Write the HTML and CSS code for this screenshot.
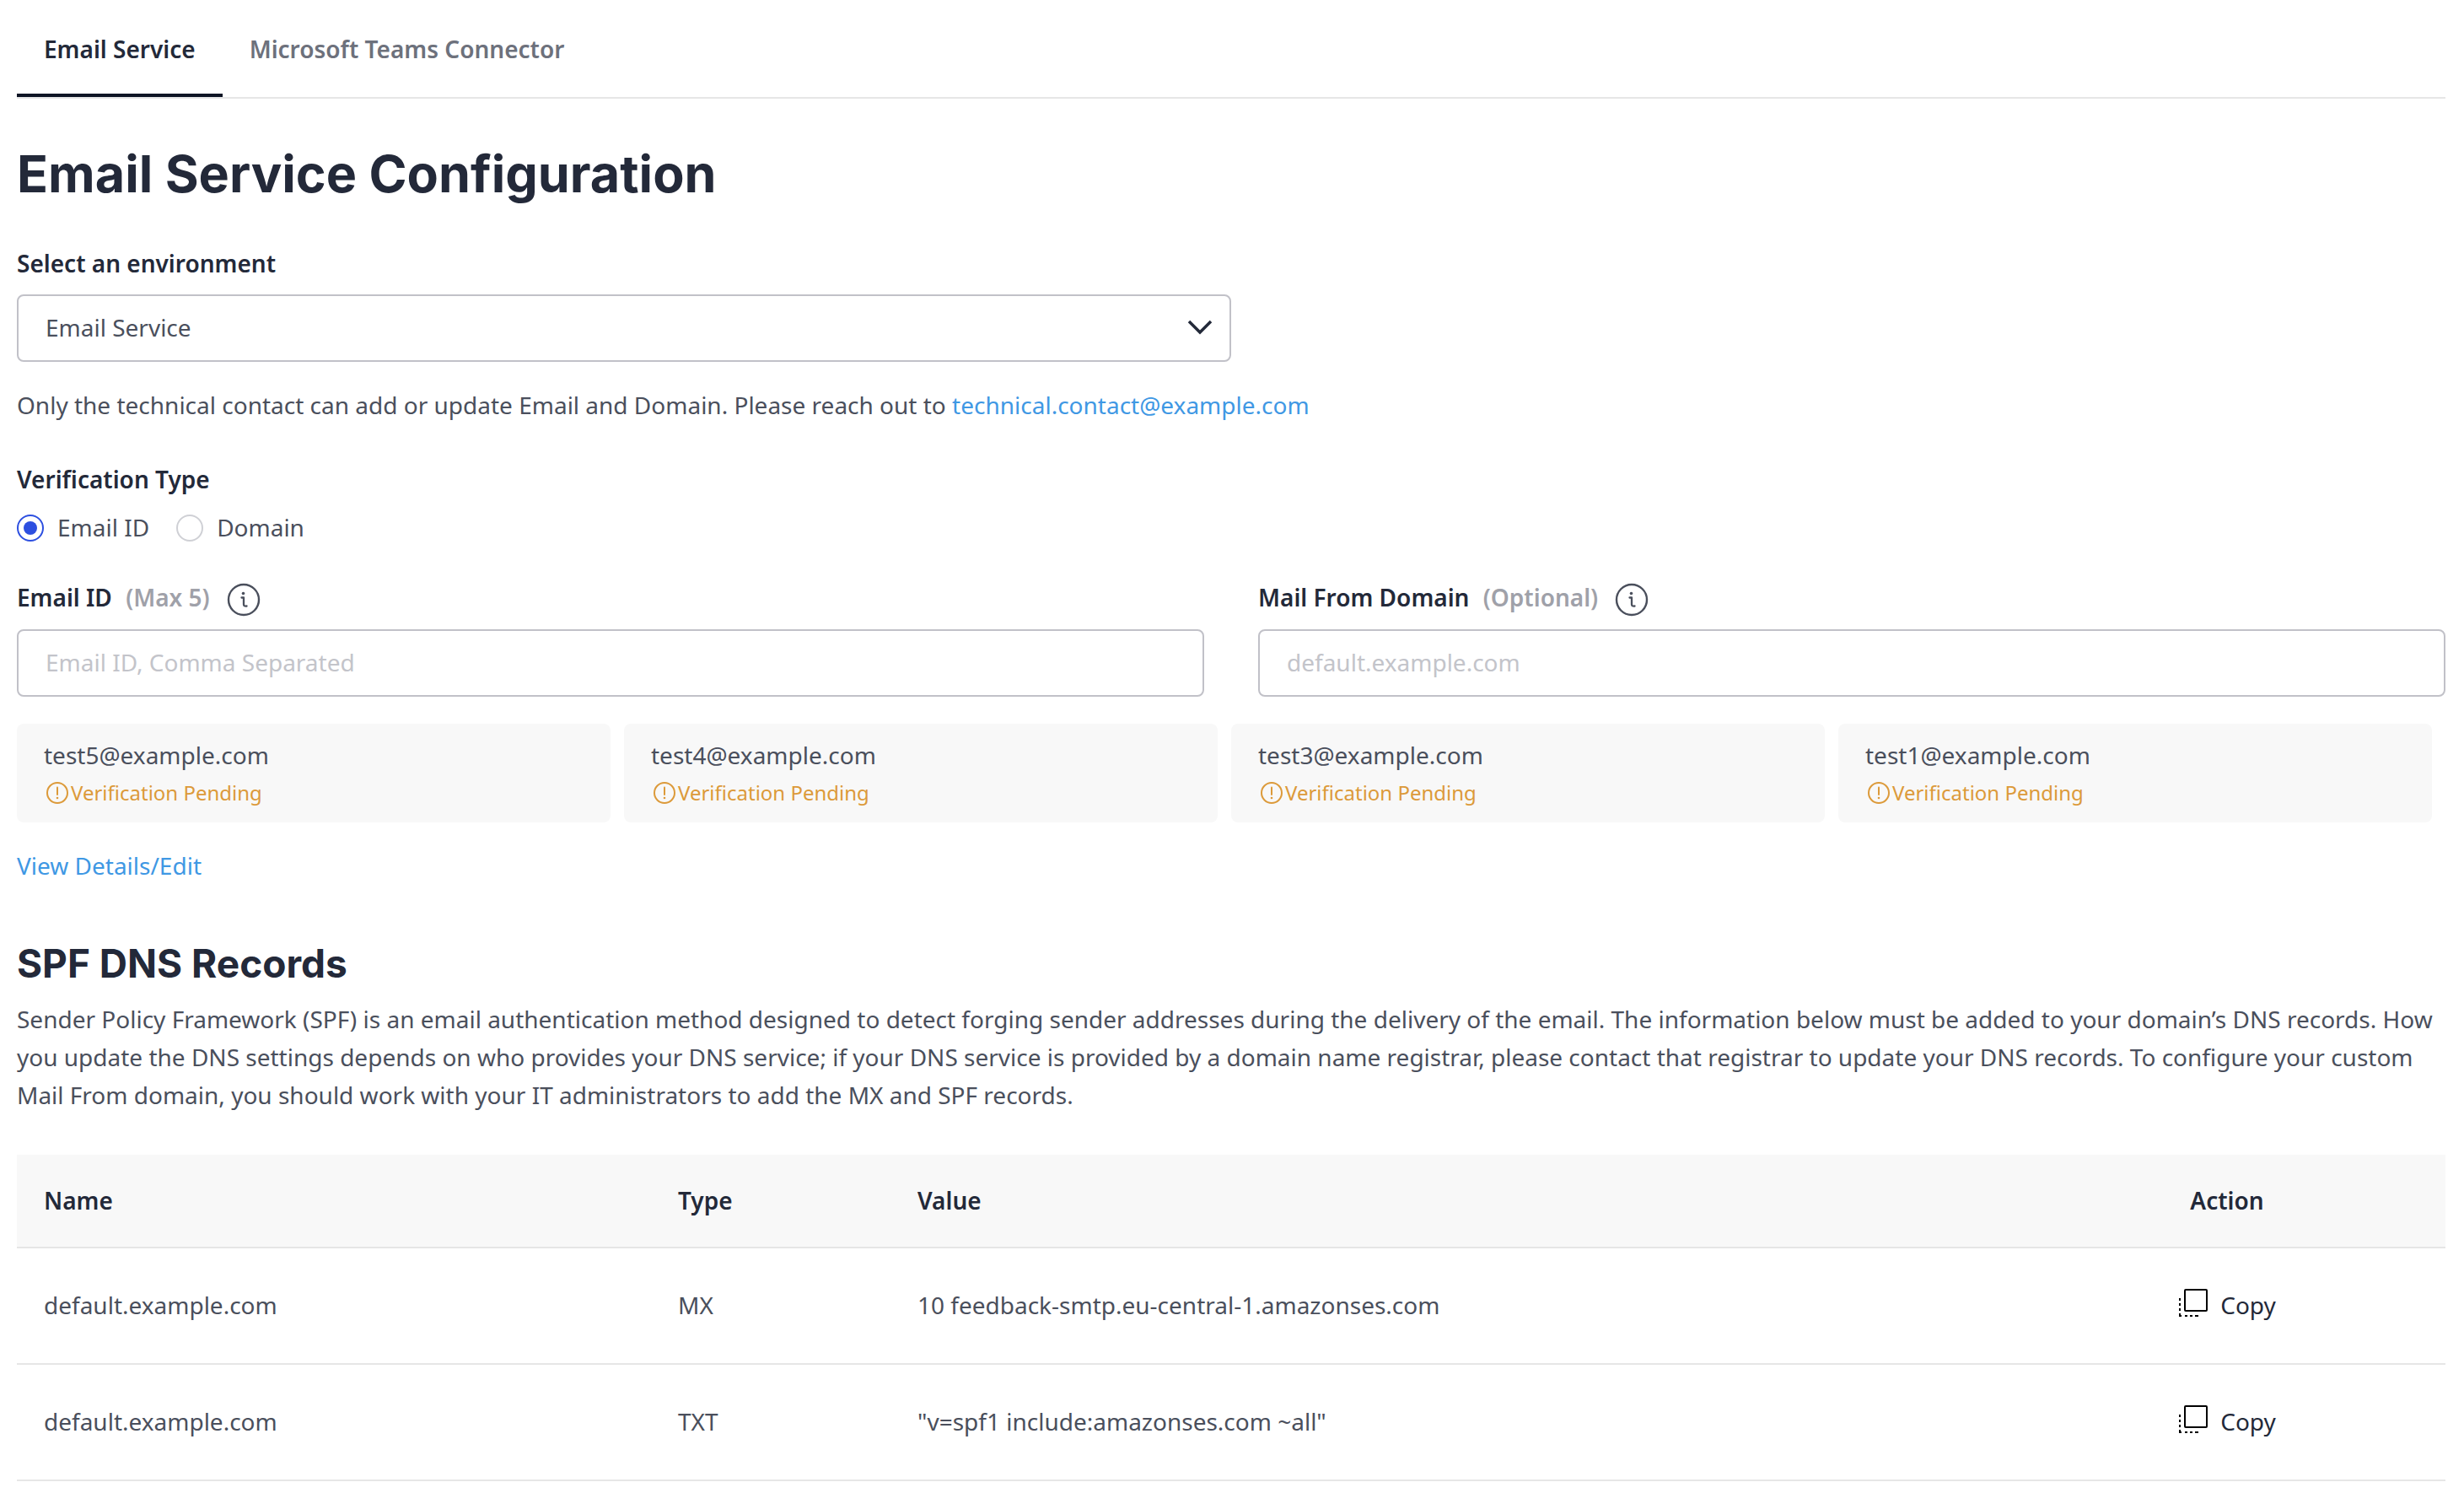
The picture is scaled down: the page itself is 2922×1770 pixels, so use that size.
FILE: index.html
```html
<!DOCTYPE html>
<html lang="en">
<head>
<meta charset="utf-8">
<title>Email Service Configuration</title>
<meta name="viewport" content="width=device-width, initial-scale=1">
<link rel="stylesheet" href="styles.css">
</head>
<body>
<svg class="sprite" aria-hidden="true">
  <symbol id="icon-info" viewBox="0 0 40 40">
    <circle cx="20" cy="20" r="18" fill="none" stroke="currentColor" stroke-width="2.400"/>
    <circle cx="19.500" cy="12.500" r="1.800" fill="currentColor"/>
    <path d="M17.500 17.500h2.500v8q0 2.500 3.500 2" fill="none" stroke="currentColor" stroke-width="2.300" stroke-linecap="round" stroke-linejoin="round"/>
  </symbol>
  <symbol id="icon-alert" viewBox="0 0 30 30">
    <circle cx="15" cy="15" r="12" fill="none" stroke="currentColor" stroke-width="2"/>
    <path d="M15 8.500v8.500" stroke="currentColor" stroke-width="2" stroke-linecap="round"/>
    <circle cx="15" cy="21" r="1.300" fill="currentColor"/>
  </symbol>
  <symbol id="icon-copy" viewBox="0 0 36 36">
    <rect x="8" y="2" width="26" height="25" rx="1" fill="none" stroke="currentColor" stroke-width="2"/>
    <path d="M2 12v3M2 18v3M2 24v3M2 30v3h2M8 33h3M14 33h3M20 33h4" fill="none" stroke="currentColor" stroke-width="2"/>
  </symbol>
</svg>
<main class="page">
  <nav class="tabs" aria-label="Services">
    <a class="tab tab-active" href="#email" aria-current="page">Email Service</a>
    <a class="tab" href="#teams">Microsoft Teams Connector</a>
  </nav>

  <h1 class="page-title">Email Service Configuration</h1>

  <div class="environment">
    <label class="label" for="environment">Select an environment</label>
    <div class="select-wrap">
      <select class="control" id="environment"><option>Email Service</option></select>
      <svg class="chevron" viewBox="0 0 30 20" aria-hidden="true"><path d="M2 3l13 13L28 3" fill="none" stroke="currentColor" stroke-width="3.500"/></svg>
    </div>
  </div>
  <p class="notice">Only the technical contact can add or update Email and Domain. Please reach out to <a class="link" href="mailto:technical.contact@example.com">technical.contact@example.com</a></p>

  <fieldset class="verification">
    <legend class="label">Verification Type</legend>
    <div class="radios">
      <label class="radio"><input class="radio-input" type="radio" name="type" checked>Email ID</label>
      <label class="radio"><input class="radio-input" type="radio" name="type">Domain</label>
    </div>
  </fieldset>

  <div class="fields">
    <div class="field">
      <div class="field-head">
        <label class="label" for="email">Email ID <span class="hint">(Max 5)</span></label>
        <button class="info" type="button" aria-label="About Email ID"><svg class="info-icon"><use href="#icon-info"/></svg></button>
      </div>
      <input class="control" id="email" type="text" placeholder="Email ID, Comma Separated">
    </div>
    <div class="field">
      <div class="field-head">
        <label class="label" for="domain">Mail From Domain <span class="hint">(Optional)</span></label>
        <button class="info" type="button" aria-label="About Mail From Domain"><svg class="info-icon"><use href="#icon-info"/></svg></button>
      </div>
      <input class="control" id="domain" type="text" placeholder="default.example.com">
    </div>
  </div>

  <ul class="emails">
    <li class="email">test5@example.com<span class="status"><svg class="status-icon"><use href="#icon-alert"/></svg>Verification Pending</span></li>
    <li class="email">test4@example.com<span class="status"><svg class="status-icon"><use href="#icon-alert"/></svg>Verification Pending</span></li>
    <li class="email">test3@example.com<span class="status"><svg class="status-icon"><use href="#icon-alert"/></svg>Verification Pending</span></li>
    <li class="email">test1@example.com<span class="status"><svg class="status-icon"><use href="#icon-alert"/></svg>Verification Pending</span></li>
  </ul>
  <a class="link details-link" href="#details">View Details/Edit</a>

  <h2 class="section-title">SPF DNS Records</h2>
  <p class="description">Sender Policy Framework (SPF) is an email authentication method designed to detect forging sender addresses during the delivery of the email. The information below must be added to your domain’s DNS records. How you update the DNS settings depends on who provides your DNS service; if your DNS service is provided by a domain name registrar, please contact that registrar to update your DNS records. To configure your custom Mail From domain, you should work with your IT administrators to add the MX and SPF records.</p>

  <table class="records">
    <thead>
      <tr><th class="col-name">Name</th><th class="col-type">Type</th><th>Value</th><th class="col-action">Action</th></tr>
    </thead>
    <tbody>
      <tr><td>default.example.com</td><td>MX</td><td>10 feedback-smtp.eu-central-1.amazonses.com</td><td class="col-action"><button class="copy" type="button"><svg class="copy-icon"><use href="#icon-copy"/></svg>Copy</button></td></tr>
      <tr><td>default.example.com</td><td>TXT</td><td>"v=spf1 include:amazonses.com ~all"</td><td class="col-action"><button class="copy" type="button"><svg class="copy-icon"><use href="#icon-copy"/></svg>Copy</button></td></tr>
    </tbody>
  </table>
</main>
</body>
</html>
```
FILE: styles.css
```css
:root {
  --ink: #232939;
  --text: #4a4f5c;
  --muted: #6d717c;
  --line: #e6e6e6;
  --border: #c1c1c8;
  --surface: #f8f8f8;
  --link: #3f98e4;
  --warning: #dc9a3a;
  --primary: #2d4fe0;
}

*, *::before, *::after { box-sizing: border-box; }

body {
  margin: 0;
  background: #fff;
  color: var(--text);
  font: 400 28px/45px "Noto Sans", sans-serif;
}

button, input, select { font: inherit; color: inherit; }

.sprite { display: none; }

.page { padding: 0 22px 14px 20px; }

.tabs {
  display: flex;
  border-bottom: 2px solid var(--line);
}
.tab {
  padding: 36px 32px 34px;
  color: var(--muted);
  font-weight: 600;
  text-decoration: none;
}
.tab-active {
  color: var(--ink);
  box-shadow: inset 0 -4px #0d1424;
}

.page-title, .section-title {
  color: var(--ink);
  font-family: Inter, sans-serif;
  font-weight: 700;
}
.page-title {
  margin: 49px 0 44px;
  font-size: 61px;
  line-height: 80px;
}

.label {
  display: block;
  padding: 0;
  color: var(--ink);
  font-weight: 600;
}
.hint {
  margin-left: 9px;
  color: #9fa1a9;
}

.control {
  display: block;
  width: 100%;
  height: 80px;
  padding: 0 32px 2px;
  border: 2px solid var(--border);
  border-radius: 8px;
  background: #fff;
  appearance: none;
}
.control::placeholder { color: #c3c4ca; opacity: 1; }

.environment { width: 50%; }
.select-wrap { position: relative; margin-top: 14px; }
.chevron {
  position: absolute;
  top: 29px;
  right: 22px;
  width: 30px;
  height: 20px;
  color: var(--ink);
  pointer-events: none;
}

.notice { margin: 29px 0 43px; }
.link { color: var(--link); text-decoration: none; }

.verification { margin: 0; padding: 0; border: 0; }
.radios {
  display: flex;
  gap: 32px;
  margin-top: 12px;
}
.radio { display: flex; align-items: center; gap: 16px; }
.radio-input {
  display: grid;
  place-items: center;
  width: 32px;
  height: 32px;
  margin: 0;
  border: 2px solid #cfd0d5;
  border-radius: 50%;
  appearance: none;
}
.radio-input:checked { border-color: var(--primary); }
.radio-input:checked::before {
  content: "";
  width: 16px;
  height: 16px;
  border-radius: 50%;
  background: var(--primary);
}

.fields {
  display: grid;
  grid-template-columns: 1fr 1fr;
  gap: 64px;
  margin-top: 38px;
}
.field-head {
  display: flex;
  align-items: center;
  gap: 20px;
  margin-bottom: 15px;
}
.info {
  display: flex;
  padding: 4px 0 0;
  border: 0;
  background: none;
}
.info-icon { width: 40px; height: 40px; }

.emails {
  display: grid;
  grid-template-columns: repeat(4, 1fr);
  gap: 16px;
  margin: 32px 16px 29px 0;
  padding: 0;
  list-style: none;
}
.email {
  padding: 15px 32px;
  border-radius: 8px;
  background: var(--surface);
}
.status {
  display: flex;
  align-items: center;
  margin-top: 2px;
  color: var(--warning);
  font-size: 24px;
  line-height: 40px;
}
.status-icon { width: 32px; height: 30px; }

.details-link { display: inline-block; }

.section-title {
  margin: 63px 0 14px;
  font-size: 46px;
  line-height: 60px;
}
.description { margin: 0 0 48px; }

.records {
  width: 100%;
  border-collapse: collapse;
  table-layout: fixed;
}
.records th, .records td {
  padding: 45px 32px 46px;
  border-bottom: 2px solid var(--line);
  text-align: left;
}
.records th {
  padding: 32px;
  background: var(--surface);
  color: var(--ink);
  font-weight: 600;
}
.records .col-name { width: 752px; }
.records .col-type { width: 284px; }
.records .col-action { width: 518px; text-align: center; }
.copy {
  display: inline-flex;
  align-items: flex-start;
  gap: 14px;
  padding: 0;
  border: 0;
  background: none;
  color: var(--ink);
  vertical-align: top;
}
.copy-icon {
  width: 36px;
  height: 36px;
  margin-top: 2px;
  color: #000;
}
```
